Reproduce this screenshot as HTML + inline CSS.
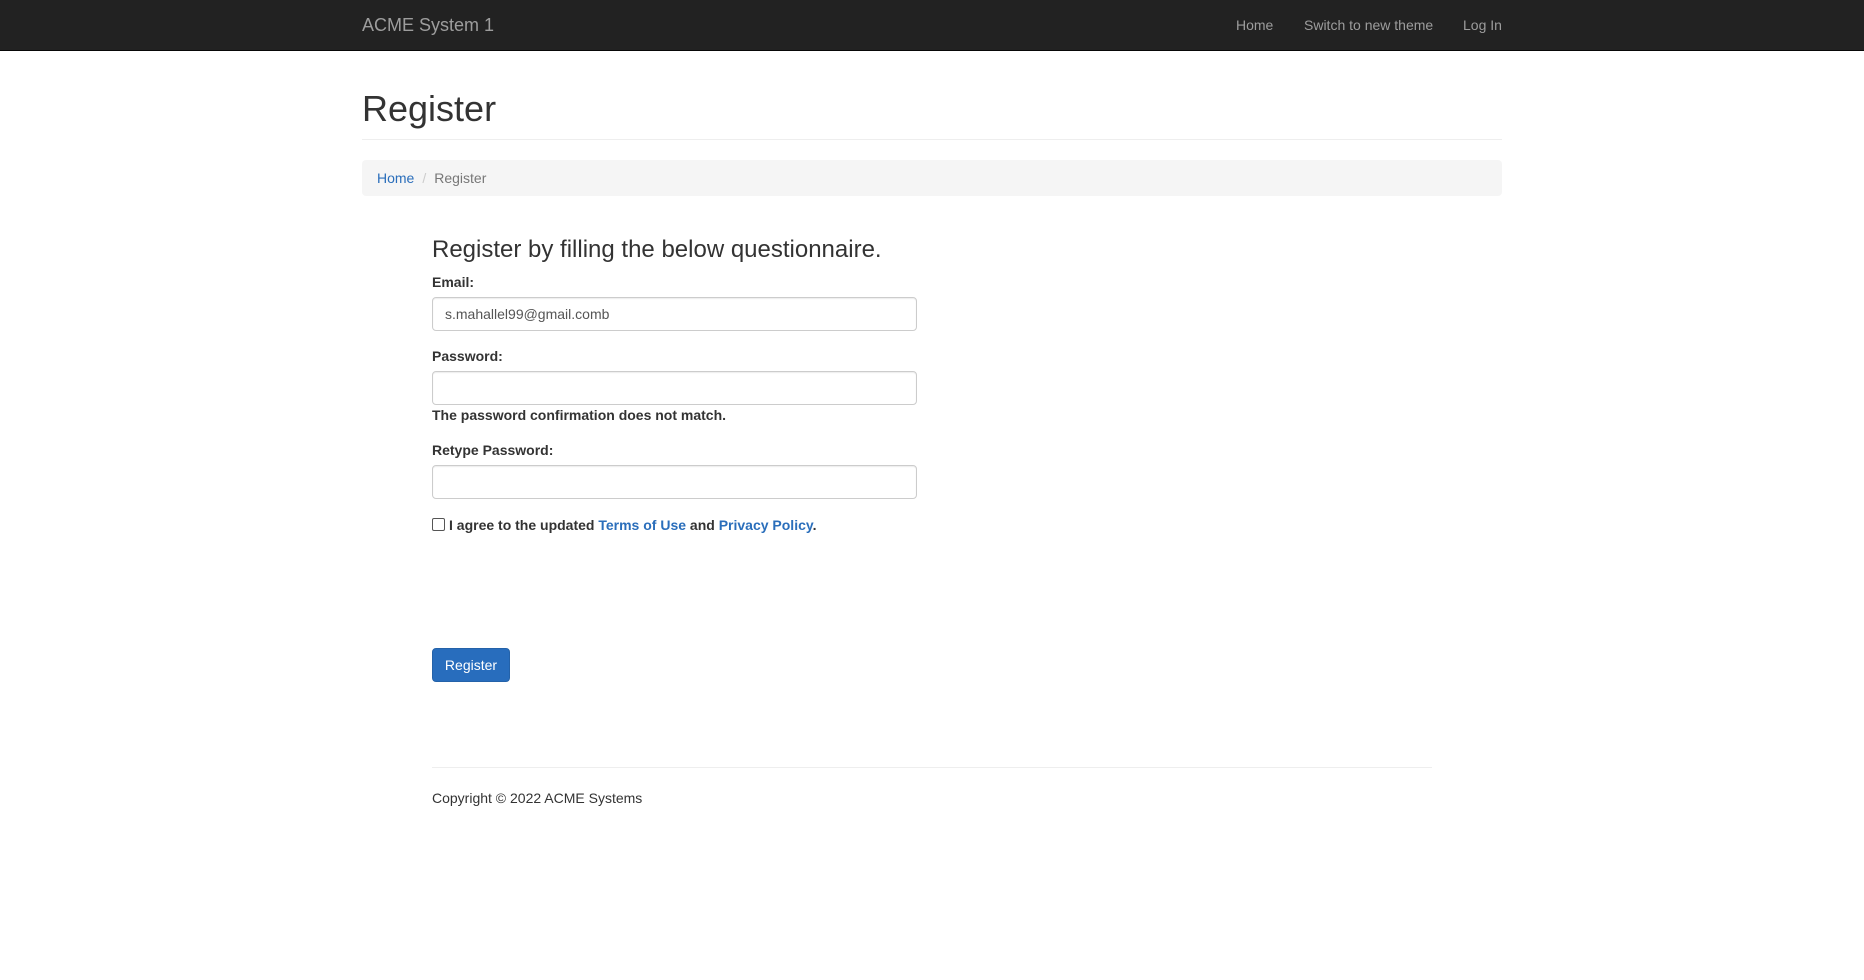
<!DOCTYPE html>
<html><head><style>
*{box-sizing:border-box;margin:0;padding:0}
body{width:1864px;height:980px;background:#fff;font-family:"Liberation Sans",sans-serif;font-size:14px;color:#333;position:relative;overflow:hidden}
.a{position:absolute;white-space:nowrap}
.nav{position:absolute;left:0;top:0;width:1864px;height:51px;background:#222;border-bottom:1px solid #080808}
.nav .a{color:#9d9d9d;line-height:20px;top:15px}
a{color:#2a6ebb;text-decoration:none}
label,.b{font-weight:bold}
.inp{position:absolute;left:432px;width:485px;height:34px;border:1px solid #ccc;border-radius:4px;box-shadow:inset 0 1px 1px rgba(0,0,0,.075);padding:6px 12px;line-height:20px;color:#555}
</style></head><body>
<div class="nav">
<div class="a" style="left:362px;top:15px;font-size:18px">ACME System 1</div>
<div class="a" style="left:1236px">Home</div>
<div class="a" style="left:1304px">Switch to new theme</div>
<div class="a" style="left:1463px">Log In</div>
</div>
<div class="a" style="left:362px;top:86px;font-size:36px;line-height:46px">Register</div>
<div class="a" style="left:362px;top:139px;width:1140px;border-top:1px solid #eee"></div>
<div class="a" style="left:362px;top:160px;width:1140px;height:36px;background:#f5f5f5;border-radius:4px;padding:8px 15px;line-height:20px"><a href="#">Home</a><span style="color:#ccc;padding:0 8px">/</span><span style="color:#777">Register</span></div>
<div class="a" style="left:432px;top:236px;font-size:24px;line-height:28px">Register by filling the below questionnaire.</div>
<div class="a b" style="left:432px;top:272px;line-height:20px">Email:</div>
<div class="inp" style="top:297px">s.mahallel99@gmail.comb</div>
<div class="a b" style="left:432px;top:346px;line-height:20px">Password:</div>
<div class="inp" style="top:371px"></div>
<div class="a b" style="left:432px;top:405px;line-height:20px">The password confirmation does not match.</div>
<div class="a b" style="left:432px;top:440px;line-height:20px">Retype Password:</div>
<div class="inp" style="top:465px"></div>
<div class="a" style="left:432px;top:518px;width:13px;height:13px;border:1px solid #555;border-radius:2px"></div>
<div class="a b" style="left:449px;top:515px;line-height:20px">I agree to the updated <a href="#">Terms of Use</a> and <a href="#">Privacy Policy</a>.</div>
<div class="a" style="left:432px;top:648px;width:78px;height:34px;background:#286dbd;border:1px solid #2462a9;border-radius:4px;color:#fff;text-align:center;line-height:32px">Register</div>
<div class="a" style="left:432px;top:767px;width:1000px;border-top:1px solid #eee"></div>
<div class="a" style="left:432px;top:788px;line-height:20px">Copyright © 2022 ACME Systems</div>
</body></html>
